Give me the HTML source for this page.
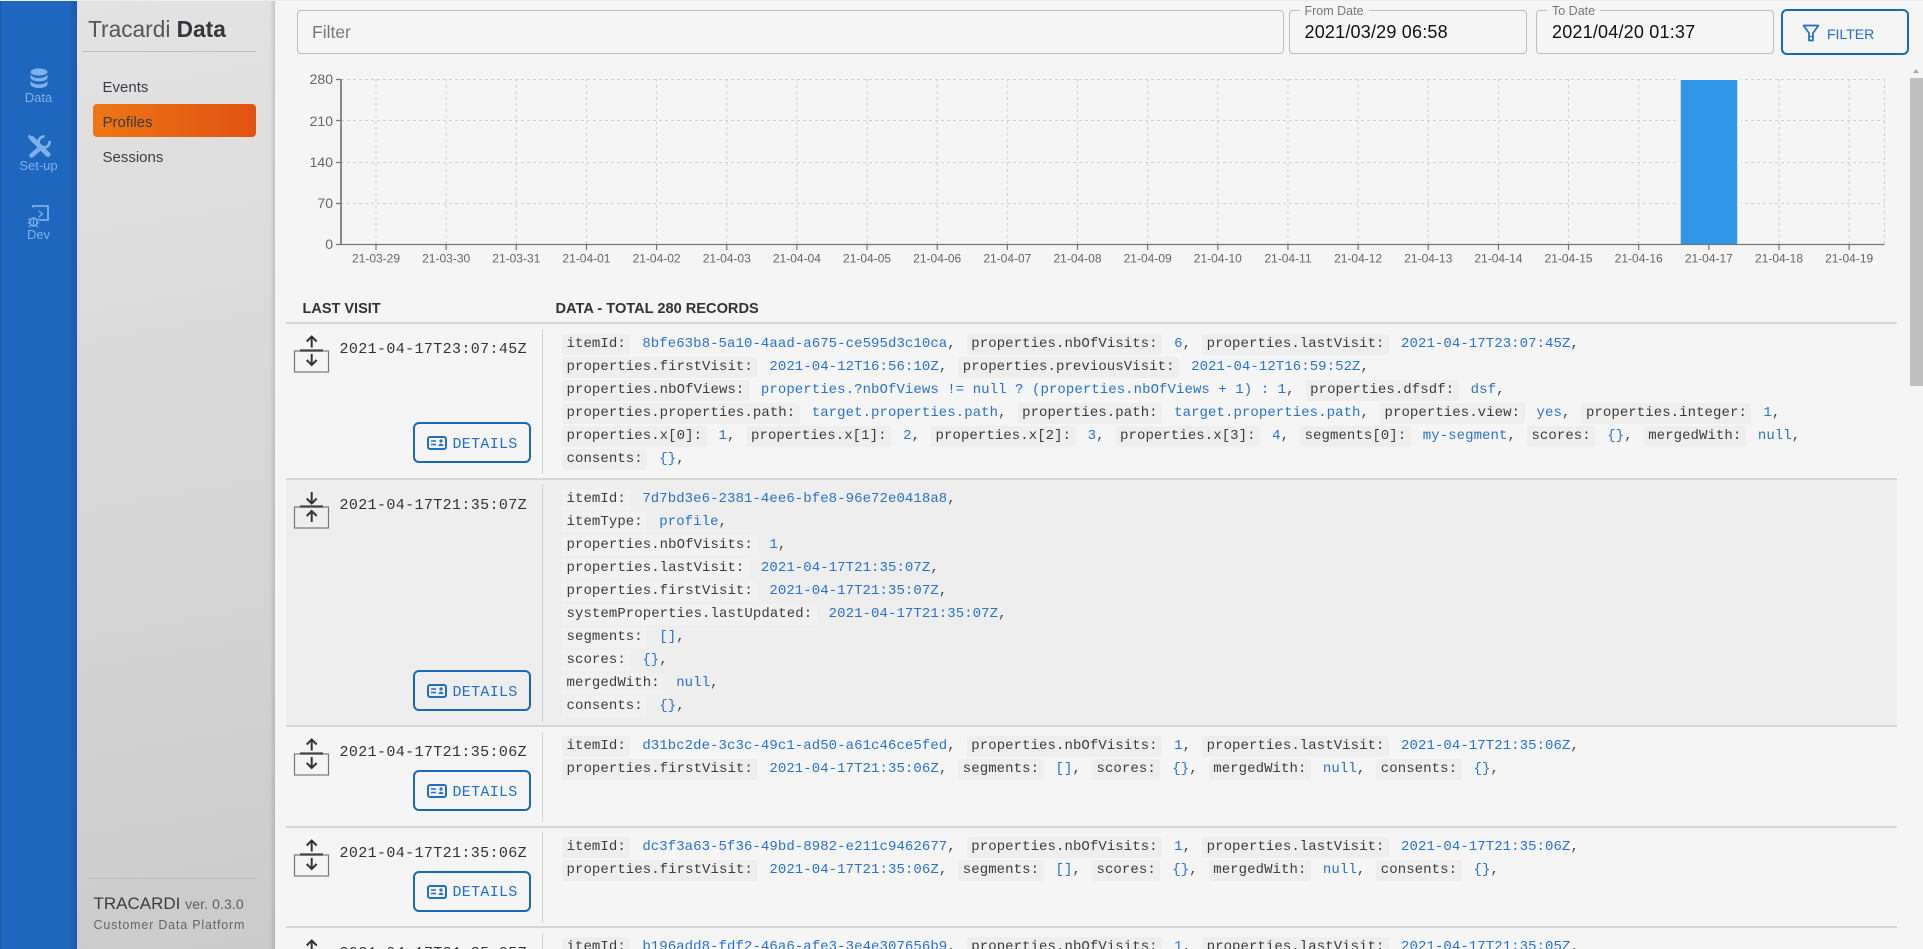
<!DOCTYPE html>
<html lang="en">
<head>
<meta charset="utf-8">
<title>Tracardi Data</title>
<style>
html,body{margin:0;padding:0;width:1923px;height:949px;overflow:hidden;background:#f5f5f5;font-family:"Liberation Sans",sans-serif;color:#333}
*{box-sizing:border-box}
#page{position:absolute;left:0;top:0;width:1923px;height:949px;overflow:hidden;background:#f5f5f5}
.a{position:absolute}
#blue{position:absolute;left:0;top:1px;width:77px;height:948px;background:linear-gradient(90deg,#1f66bf 0,#1f66bf 88%,#1a5cac 100%);border-left:1px solid #1c58a2}
#gray{position:absolute;left:77px;top:1px;width:198px;height:948px;background:linear-gradient(170deg,#e3e3e3 0,#cbcbcb 100%);box-shadow:inset -6px 0 6px -5px rgba(0,0,0,.2)}
.nl{position:absolute;left:0;width:77px;text-align:center;font-size:13px;line-height:16px;color:#7fb0ea}
.mi{position:absolute;left:102.5px;font-size:15px;line-height:20px;color:#3c3c44}
.field{position:absolute;top:10px;height:44px;border:1px solid #bdbdbd;border-radius:4px}
.lg{position:absolute;background:#f5f5f5;padding:0 5px;font-size:12.5px;line-height:14px;color:#777}
.val{position:absolute;font-size:18px;line-height:22px;color:#111;letter-spacing:.2px}
.bd{position:absolute;left:286px;width:1611px;height:2px;background:#d6d6d6}
.vd{position:absolute;left:542px;width:1px;background:#d2d2d2}
.time{position:absolute;left:339.5px;font:15px/20px "Liberation Mono",monospace;letter-spacing:.375px;color:#333;white-space:nowrap}
.btn{position:absolute;left:412.5px;width:118.5px;height:41px;border:2px solid #1b68b6;border-radius:6px}
.btn span{position:absolute;left:38px;top:10.5px;font:15px/20px "Liberation Mono",monospace;letter-spacing:.3px;color:#226fc2}
.btn svg{position:absolute;left:12px;top:12px}
.l{position:absolute;left:562px;height:23px;white-space:nowrap;font:14px/23px "Liberation Mono",monospace;letter-spacing:.07px;color:#444}
.l b{display:inline-block;font-weight:normal;background:#eeeeee;border-radius:3px;height:21px;line-height:21px;padding:0 4.5px;margin-right:12px;color:#3c3c3c}
.alt b{background:#f1f1f1}
.l i{font-style:normal;color:#2a72c9}
.l u{text-decoration:none;margin-right:11px}
.ic{position:absolute;left:285px}
</style>
</head>
<body>
<div id="page">
<div class="a" style="left:0;top:0;width:1923px;height:1px;background:#eee"></div>
<div id="gray"></div>
<div id="blue"></div>

<svg class="a" style="left:0;top:0" width="77" height="240" viewBox="0 0 77 240">
  <g fill="#7fb0ea">
    <ellipse cx="39" cy="72" rx="8.5" ry="3.6"/>
    <path d="M30.5 74.5c1.5 2.4 5 3.6 8.5 3.6s7-1.2 8.5-3.6v3.200c0 2-3.800 3.700-8.500 3.700s-8.500-1.700-8.500-3.700z"/>
    <path d="M30.5 80.8c1.5 2.4 5 3.6 8.5 3.6s7-1.2 8.5-3.6v3.400c0 2-3.800 3.800-8.500 3.800s-8.500-1.800-8.500-3.800z"/>
  </g>
  <g fill="none" stroke="#7fb0ea" stroke-linecap="round">
    <path d="M32 138.500l16 16" stroke-width="5"/>
    <path d="M29.500 136.500l3.500 3.500" stroke-width="3"/>
    <path d="M41.500 147l-10 8.500" stroke-width="4.500"/>
    <path d="M49.500 141a5.500 5.500 0 1 1-5-4.500" stroke-width="2.700" stroke-linecap="butt"/>
    <path d="M33 207v-1.500h15v14h-9" stroke-width="1.800" stroke-linecap="butt" transform="translate(0 .5)"/>
    <path d="M39 211l3.500 3-3.500 3" stroke-width="1.200"/>
    <ellipse cx="33.500" cy="222" rx="3.600" ry="4" stroke-width="1.500"/>
    <path d="M28.500 219l2 1.500M38.500 219l-2 1.500M28 223h2M39 223h-2M29 227l1.500-1.500M38 227l-1.500-1.500M33.500 218v8" stroke-width="1.100"/>
  </g>
</svg>
<div class="nl" style="top:90px">Data</div>
<div class="nl" style="top:158px">Set-up</div>
<div class="nl" style="top:227px">Dev</div>

<div class="a" style="left:88px;top:15px;font-size:22.700px;line-height:28px;white-space:nowrap;color:#55555a">Tracardi <strong style="color:#36363c">Data</strong></div>
<div class="a" style="left:82px;top:51px;width:174px;height:1px;background:#bdbdbd"></div>
<div class="a" style="left:93px;top:104px;width:163px;height:33px;border-radius:4px;background:linear-gradient(90deg,#ee7715,#e05111)"></div>
<div class="mi" style="top:78px">Events</div>
<div class="mi" style="top:113px">Profiles</div>
<div class="mi" style="top:148px">Sessions</div>

<div class="a" style="left:88px;top:878px;width:168px;height:1px;background:#bdbdbd"></div>
<div class="a" style="left:93.500px;top:893px;font-size:17px;line-height:22px;white-space:nowrap;color:#3c3c3c">TRACARDI <span style="font-size:14px;letter-spacing:.1px;color:#5e5e5e">ver. 0.3.0</span></div>
<div class="a" style="left:93.500px;top:917px;font-size:12.500px;line-height:16px;letter-spacing:.8px;white-space:nowrap;color:#666">Customer Data Platform</div>

<div class="field" style="left:297px;width:987px"><div class="a" style="left:14px;top:10px;font-size:17.500px;line-height:22px;color:#777">Filter</div></div>
<div class="field" style="left:1288.500px;width:238px"><div class="lg" style="top:-7px;left:10px">From Date</div><div class="val" style="left:15px;top:10px">2021/03/29 06:58</div></div>
<div class="field" style="left:1536px;width:237.500px"><div class="lg" style="top:-7px;left:10px">To Date</div><div class="val" style="left:15px;top:10px">2021/04/20 01:37</div></div>
<div class="a" style="left:1781px;top:9px;width:128px;height:46px;border:2px solid #1b68b6;border-radius:6px">
  <svg class="a" style="left:19px;top:13px" width="18" height="18" viewBox="0 0 18 18"><path d="M1.500 1.500h15L11 9v7.500H7V9z" fill="none" stroke="#226fc2" stroke-width="1.700" stroke-linejoin="round"/><path d="M7 12.500h4" stroke="#226fc2" stroke-width="1.200"/></svg>
  <div class="a" style="left:44px;top:14px;font-size:14px;line-height:18px;color:#226fc2">FILTER</div>
</div>

<svg class="a" style="left:0;top:0" width="1923" height="290" viewBox="0 0 1923 290" font-family="Liberation Sans, sans-serif">
  <g stroke="#d0d0d0" stroke-width="1" stroke-dasharray="3 3" fill="none">
    <path d="M341 79.500H1884.500M341 120.500H1884.500M341 162.500H1884.500M341 203.500H1884.500"/>
    <path d="M376 79V244M446.150 79V244M516.300 79V244M586.450 79V244M656.600 79V244M726.750 79V244M796.900 79V244M867.050 79V244M937.200 79V244M1007.350 79V244M1077.500 79V244M1147.650 79V244M1217.800 79V244M1287.950 79V244M1358.100 79V244M1428.250 79V244M1498.400 79V244M1568.550 79V244M1638.700 79V244M1708.850 79V244M1779 79V244M1849.150 79V244M1884.500 79V244"/>
  </g>
  <rect x="1678" y="78" width="63" height="167" fill="#f5f5f5"/>
  <rect x="1680.700" y="80" width="56.500" height="164" fill="#3097e6"/>
  <g stroke="#777" fill="none" stroke-width="1.200">
    <path d="M341 244.500H1884.500"/>
    <path d="M341 79V245" stroke="#888" stroke-width="2"/>
    <path d="M336 79.500h5M336 120.500h5M336 162.500h5M336 203.500h5M336 244.500h5"/>
    <path d="M376 244v6M446.150 244v6M516.300 244v6M586.450 244v6M656.600 244v6M726.750 244v6M796.900 244v6M867.050 244v6M937.200 244v6M1007.350 244v6M1077.500 244v6M1147.650 244v6M1217.800 244v6M1287.950 244v6M1358.100 244v6M1428.250 244v6M1498.400 244v6M1568.550 244v6M1638.700 244v6M1708.850 244v6M1779 244v6M1849.150 244v6"/>
  </g>
  <g font-size="14" fill="#666" text-anchor="end">
    <text x="333" y="84">280</text><text x="333" y="126">210</text><text x="333" y="167">140</text><text x="333" y="208">70</text><text x="333" y="249">0</text>
  </g>
  <g font-size="12" fill="#666" text-anchor="middle">
    <text x="376" y="262.500">21-03-29</text><text x="446.150" y="262.500">21-03-30</text><text x="516.300" y="262.500">21-03-31</text><text x="586.450" y="262.500">21-04-01</text><text x="656.600" y="262.500">21-04-02</text><text x="726.750" y="262.500">21-04-03</text><text x="796.900" y="262.500">21-04-04</text><text x="867.050" y="262.500">21-04-05</text><text x="937.200" y="262.500">21-04-06</text><text x="1007.350" y="262.500">21-04-07</text><text x="1077.500" y="262.500">21-04-08</text><text x="1147.650" y="262.500">21-04-09</text><text x="1217.800" y="262.500">21-04-10</text><text x="1287.950" y="262.500">21-04-11</text><text x="1358.100" y="262.500">21-04-12</text><text x="1428.250" y="262.500">21-04-13</text><text x="1498.400" y="262.500">21-04-14</text><text x="1568.550" y="262.500">21-04-15</text><text x="1638.700" y="262.500">21-04-16</text><text x="1708.850" y="262.500">21-04-17</text><text x="1779" y="262.500">21-04-18</text><text x="1849.150" y="262.500">21-04-19</text>
  </g>
</svg>

<div class="a" style="left:1910px;top:64px;width:13px;height:885px;background:#f5f5f5"></div>
<div class="a" style="left:1913px;top:69px;width:0;height:0;border-left:3.500px solid transparent;border-right:3.500px solid transparent;border-bottom:4px solid #aaa"></div>
<div class="a" style="left:1910px;top:78px;width:13px;height:308px;background:#c0c0c0"></div>

<div class="a" style="left:302.500px;top:300px;font-size:14.500px;line-height:18px;font-weight:bold;white-space:nowrap;color:#333">LAST VISIT</div>
<div class="a" style="left:555.500px;top:300px;font-size:14.600px;line-height:18px;font-weight:bold;white-space:nowrap;color:#333">DATA - TOTAL 280 RECORDS</div>

<div class="a" style="left:286px;top:480px;width:1611px;height:246px;background:#eeeeee"></div>
<div class="bd" style="top:322px"></div>
<div class="bd" style="top:478px"></div>
<div class="bd" style="top:725px"></div>
<div class="bd" style="top:826px"></div>
<div class="bd" style="top:926px"></div>

<div class="vd" style="top:329px;height:145px"></div>
<div class="vd" style="top:484px;height:238px"></div>
<div class="vd" style="top:732px;height:90px"></div>
<div class="vd" style="top:832px;height:91px"></div>
<div class="vd" style="top:933px;height:16px"></div>

<svg class="ic" style="top:330px" width="50" height="44" viewBox="0 0 50 44" fill="none"><rect x="9.500" y="21" width="34" height="21" stroke="#777" stroke-width="1.200"/><path d="M15 20.500h23" stroke="#444" stroke-width="2.200"/><path d="M26.700 17.500V7M21.700 11.500l5-5 5 5M26.700 24v10.500M21.700 30l5 5 5-5" stroke="#333" stroke-width="2"/></svg>
<svg class="ic" style="top:487px" width="50" height="44" viewBox="0 0 50 44" fill="none"><rect x="9.500" y="20" width="34" height="21" stroke="#777" stroke-width="1.200"/><path d="M15 19.500h23" stroke="#444" stroke-width="2.200"/><path d="M26.700 5v11M21.700 11.500l5 5 5-5M26.700 24v11M21.700 29l5-5 5 5" stroke="#333" stroke-width="2"/></svg>
<svg class="ic" style="top:733px" width="50" height="44" viewBox="0 0 50 44" fill="none"><rect x="9.500" y="21" width="34" height="21" stroke="#777" stroke-width="1.200"/><path d="M15 20.500h23" stroke="#444" stroke-width="2.200"/><path d="M26.700 17.500V7M21.700 11.500l5-5 5 5M26.700 24v10.500M21.700 30l5 5 5-5" stroke="#333" stroke-width="2"/></svg>
<svg class="ic" style="top:834px" width="50" height="44" viewBox="0 0 50 44" fill="none"><rect x="9.500" y="21" width="34" height="21" stroke="#777" stroke-width="1.200"/><path d="M15 20.500h23" stroke="#444" stroke-width="2.200"/><path d="M26.700 17.500V7M21.700 11.500l5-5 5 5M26.700 24v10.500M21.700 30l5 5 5-5" stroke="#333" stroke-width="2"/></svg>
<svg class="ic" style="top:934px" width="50" height="15" viewBox="0 0 50 15" fill="none"><path d="M26.700 17.500V7M21.700 11.500l5-5 5 5" stroke="#333" stroke-width="2"/></svg>

<div class="time" style="top:340px">2021-04-17T23:07:45Z</div>
<div class="time" style="top:496px">2021-04-17T21:35:07Z</div>
<div class="time" style="top:743px">2021-04-17T21:35:06Z</div>
<div class="time" style="top:844px">2021-04-17T21:35:06Z</div>
<div class="time" style="top:944px">2021-04-17T21:35:05Z</div>

<div class="btn" style="top:422px"><svg width="20" height="14" viewBox="0 0 20 14" fill="none"><rect x="1" y="1" width="18" height="12" rx="2" stroke="#226fc2" stroke-width="2"/><path d="M4 5h5M4 8.500h5" stroke="#226fc2" stroke-width="1.500"/><circle cx="14" cy="5" r="1.600" fill="#226fc2"/><path d="M11.500 10c0-3 5-3 5 0z" fill="#226fc2"/></svg><span>DETAILS</span></div>
<div class="btn" style="top:670px"><svg width="20" height="14" viewBox="0 0 20 14" fill="none"><rect x="1" y="1" width="18" height="12" rx="2" stroke="#226fc2" stroke-width="2"/><path d="M4 5h5M4 8.500h5" stroke="#226fc2" stroke-width="1.500"/><circle cx="14" cy="5" r="1.600" fill="#226fc2"/><path d="M11.500 10c0-3 5-3 5 0z" fill="#226fc2"/></svg><span>DETAILS</span></div>
<div class="btn" style="top:770px"><svg width="20" height="14" viewBox="0 0 20 14" fill="none"><rect x="1" y="1" width="18" height="12" rx="2" stroke="#226fc2" stroke-width="2"/><path d="M4 5h5M4 8.500h5" stroke="#226fc2" stroke-width="1.500"/><circle cx="14" cy="5" r="1.600" fill="#226fc2"/><path d="M11.500 10c0-3 5-3 5 0z" fill="#226fc2"/></svg><span>DETAILS</span></div>
<div class="btn" style="top:870.500px"><svg width="20" height="14" viewBox="0 0 20 14" fill="none"><rect x="1" y="1" width="18" height="12" rx="2" stroke="#226fc2" stroke-width="2"/><path d="M4 5h5M4 8.500h5" stroke="#226fc2" stroke-width="1.500"/><circle cx="14" cy="5" r="1.600" fill="#226fc2"/><path d="M11.500 10c0-3 5-3 5 0z" fill="#226fc2"/></svg><span>DETAILS</span></div>

<div class="l" style="top:333px"><b>itemId:</b><i>8bfe63b8-5a10-4aad-a675-ce595d3c10ca</i><u>,</u><b>properties.nbOfVisits:</b><i>6</i><u>,</u><b>properties.lastVisit:</b><i>2021-04-17T23:07:45Z</i><u>,</u></div>
<div class="l" style="top:356px"><b>properties.firstVisit:</b><i>2021-04-12T16:56:10Z</i><u>,</u><b>properties.previousVisit:</b><i>2021-04-12T16:59:52Z</i><u>,</u></div>
<div class="l" style="top:379px"><b>properties.nbOfViews:</b><i>properties.?nbOfViews != null ? (properties.nbOfViews + 1) : 1</i><u>,</u><b>properties.dfsdf:</b><i>dsf</i><u>,</u></div>
<div class="l" style="top:402px"><b>properties.properties.path:</b><i>target.properties.path</i><u>,</u><b>properties.path:</b><i>target.properties.path</i><u>,</u><b>properties.view:</b><i>yes</i><u>,</u><b>properties.integer:</b><i>1</i><u>,</u></div>
<div class="l" style="top:425px"><b>properties.x[0]:</b><i>1</i><u>,</u><b>properties.x[1]:</b><i>2</i><u>,</u><b>properties.x[2]:</b><i>3</i><u>,</u><b>properties.x[3]:</b><i>4</i><u>,</u><b>segments[0]:</b><i>my-segment</i><u>,</u><b>scores:</b><i>{}</i><u>,</u><b>mergedWith:</b><i>null</i><u>,</u></div>
<div class="l" style="top:448px"><b>consents:</b><i>{}</i><u>,</u></div>

<div class="l alt" style="top:488px"><b>itemId:</b><i>7d7bd3e6-2381-4ee6-bfe8-96e72e0418a8</i><u>,</u></div>
<div class="l alt" style="top:511px"><b>itemType:</b><i>profile</i><u>,</u></div>
<div class="l alt" style="top:534px"><b>properties.nbOfVisits:</b><i>1</i><u>,</u></div>
<div class="l alt" style="top:557px"><b>properties.lastVisit:</b><i>2021-04-17T21:35:07Z</i><u>,</u></div>
<div class="l alt" style="top:580px"><b>properties.firstVisit:</b><i>2021-04-17T21:35:07Z</i><u>,</u></div>
<div class="l alt" style="top:603px"><b>systemProperties.lastUpdated:</b><i>2021-04-17T21:35:07Z</i><u>,</u></div>
<div class="l alt" style="top:626px"><b>segments:</b><i>[]</i><u>,</u></div>
<div class="l alt" style="top:649px"><b>scores:</b><i>{}</i><u>,</u></div>
<div class="l alt" style="top:672px"><b>mergedWith:</b><i>null</i><u>,</u></div>
<div class="l alt" style="top:695px"><b>consents:</b><i>{}</i><u>,</u></div>

<div class="l" style="top:735px"><b>itemId:</b><i>d31bc2de-3c3c-49c1-ad50-a61c46ce5fed</i><u>,</u><b>properties.nbOfVisits:</b><i>1</i><u>,</u><b>properties.lastVisit:</b><i>2021-04-17T21:35:06Z</i><u>,</u></div>
<div class="l" style="top:758px"><b>properties.firstVisit:</b><i>2021-04-17T21:35:06Z</i><u>,</u><b>segments:</b><i>[]</i><u>,</u><b>scores:</b><i>{}</i><u>,</u><b>mergedWith:</b><i>null</i><u>,</u><b>consents:</b><i>{}</i><u>,</u></div>

<div class="l" style="top:835.500px"><b>itemId:</b><i>dc3f3a63-5f36-49bd-8982-e211c9462677</i><u>,</u><b>properties.nbOfVisits:</b><i>1</i><u>,</u><b>properties.lastVisit:</b><i>2021-04-17T21:35:06Z</i><u>,</u></div>
<div class="l" style="top:858.500px"><b>properties.firstVisit:</b><i>2021-04-17T21:35:06Z</i><u>,</u><b>segments:</b><i>[]</i><u>,</u><b>scores:</b><i>{}</i><u>,</u><b>mergedWith:</b><i>null</i><u>,</u><b>consents:</b><i>{}</i><u>,</u></div>

<div class="l" style="top:936px"><b>itemId:</b><i>b196add8-fdf2-46a6-afe3-3e4e307656b9</i><u>,</u><b>properties.nbOfVisits:</b><i>1</i><u>,</u><b>properties.lastVisit:</b><i>2021-04-17T21:35:05Z</i><u>,</u></div>
</div>
</body>
</html>
